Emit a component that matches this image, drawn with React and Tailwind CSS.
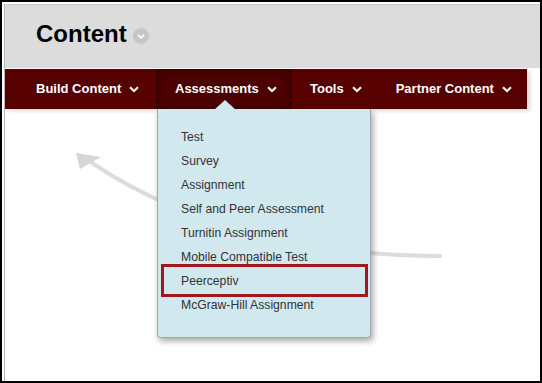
import React from "react";

function Chevron({ className = "" }) {
  return (
    <svg width="10" height="7" viewBox="0 0 10 7" className={"shrink-0 " + className}>
      <path d="M1 1.2 L5 5 L9 1.2" fill="none" stroke="white" strokeWidth="2" />
    </svg>
  );
}

const items = [
  "Test",
  "Survey",
  "Assignment",
  "Self and Peer Assessment",
  "Turnitin Assignment",
  "Mobile Compatible Test",
  "Peerceptiv",
  "McGraw-Hill Assignment",
];

export default function App() {
  return (
    <div
      className="relative w-[542px] h-[383px] border-2 border-black bg-white overflow-hidden"
      style={{ fontFamily: '"Liberation Sans", Arial, sans-serif' }}
    >
      <div className="ml-[2px] mt-[2px] h-full border-l border-[#b5b5b5] flex flex-col">
        {/* header */}
        <div className="h-[64px] bg-[#dcdcdc] border-t border-[#c8c8c8] rounded-tl-[3px] flex items-center pl-[31px] pb-[5px]">
          <span className="text-[24px] font-bold text-black leading-none">Content</span>
          <span className="ml-[6px] mt-[4px] w-[16px] h-[16px] rounded-full bg-[#c6c6c6] flex items-center justify-center">
            <svg width="8" height="5" viewBox="0 0 8 5">
              <path d="M1 0.8 L4 3.8 L7 0.8" fill="none" stroke="white" strokeWidth="1.6" />
            </svg>
          </span>
        </div>
        <div className="h-[1px] bg-white" />
        {/* nav */}
        <div className="flex">
          <div className="w-[522px] h-[40px] bg-[#560000] flex text-white font-bold text-[13px] whitespace-nowrap shadow-[3px_2px_4px_rgba(0,0,0,0.15)]">
            <div className="flex items-center pl-[31px] w-[151px] shrink-0">
              <span>Build Content</span>
              <Chevron className="ml-[8px] mt-[1px]" />
            </div>
            <div className="flex items-center pl-[18px] w-[136px] shrink-0 bg-[#4c0000] border-x border-[#360000] shadow-[inset_0_0_6px_rgba(0,0,0,0.45)]">
              <span>Assessments</span>
              <Chevron className="ml-[8px] mt-[1px]" />
            </div>
            <div className="flex items-center pl-[18px] pr-[17px]">
              <span>Tools</span>
              <Chevron className="ml-[8px] mt-[1px]" />
            </div>
            <div className="flex items-center pl-[17px]">
              <span>Partner Content</span>
              <Chevron className="ml-[8px] mt-[1px]" />
            </div>
          </div>
        </div>
      </div>

      {/* decorative arrow */}
      <svg className="absolute left-[-2px] top-[-2px]" width="542" height="383" viewBox="0 0 542 383">
        <path d="M440 256 Q 230 255 92 163" fill="none" stroke="#dcdcdc" strokeWidth="4" strokeLinecap="round" />
        <polygon points="76,153 101,157 80,169" fill="#d6d6d6" />
      </svg>

      {/* dropdown */}
      <div className="absolute left-[155px] top-[107px] w-[214px] h-[229px]">
        <div className="absolute left-0 top-0 w-full h-full bg-[#d2e8ef] border border-[#a7a7a7] border-t-0 rounded-b-[3px] shadow-[2px_3px_6px_rgba(0,0,0,0.35)]" />
        <svg className="absolute left-[57px] top-[-9px]" width="22" height="10" viewBox="0 0 22 10">
          <polygon points="0,10 11,0 22,10" fill="#d2e8ef" />
        </svg>
        <div className="relative pt-[16px] pl-[24px] flex flex-col text-[12.2px] text-[#333]">
          {items.map((t) => (
            <div key={t} className="h-[24px] flex items-center">
              {t}
            </div>
          ))}
        </div>
        <div className="absolute left-[4px] top-[155px] w-[207px] h-[33px] border-[3px] border-[#a2161e]" />
      </div>
    </div>
  );
}
